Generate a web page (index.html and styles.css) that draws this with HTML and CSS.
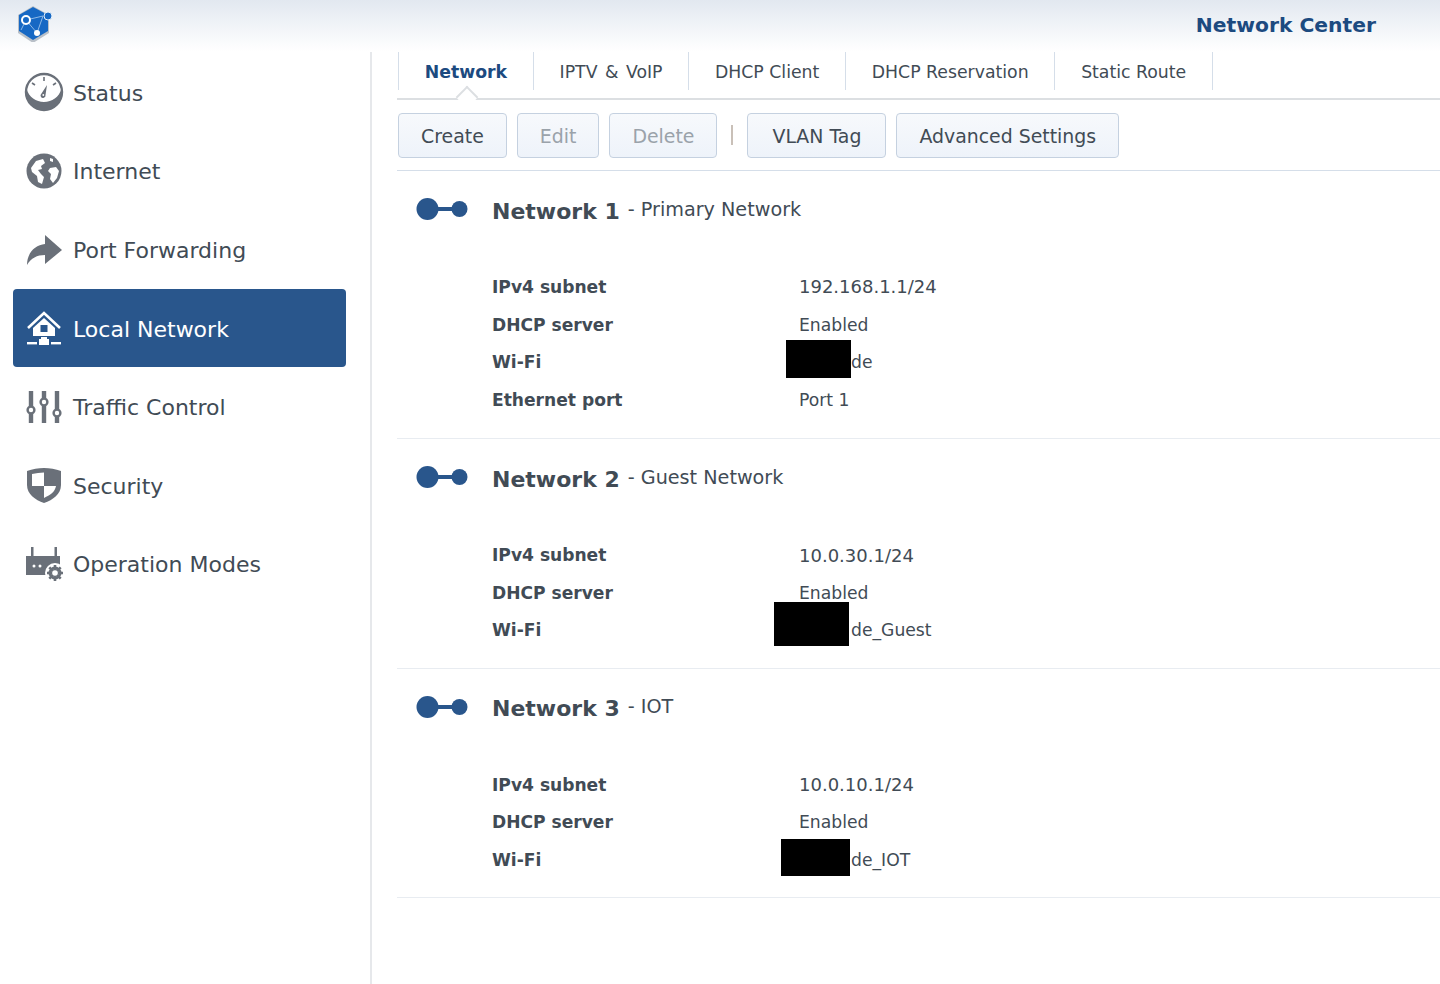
FILE: index.html
```html
<!DOCTYPE html>
<html lang="en">
<head>
  <meta charset="UTF-8">
  <title>Network Center</title>
  <link rel="stylesheet" href="styles.css">
</head>
<body>
  <header class="titlebar">
    <svg class="logo" viewBox="2 0 36 36">
      <path d="M17 0 33 9V27L17 37 2 27V9Z" fill="#b9c0c8"/>
      <path d="M17 1 32 9V25L17 34 3 25V9Z" fill="#1668c4"/>
      <path d="M10 14 27 10M10 14 21 27M27 10 21 27M10 14 5 24" stroke="#8db8e6" stroke-width="1" fill="none"/>
      <circle cx="10" cy="14" r="4" fill="#1668c4" stroke="#fff" stroke-width="2"/>
      <circle cx="21" cy="27" r="3" fill="#fff"/>
      <circle cx="32" cy="10" r="4" fill="#1668c4" stroke="#e8f0f8" stroke-width="1"/>
    </svg>
    <span class="app-name">Network Center</span>
  </header>

  <div class="app">
    <nav class="sidebar">
      <a class="nav-item">
        <svg class="nav-icon" viewBox="0 0 40 40">
          <circle cx="20" cy="20" r="18" fill="none" stroke="#6a7079" stroke-width="2.4"/>
          <path d="M2.500 17C5 25 12 30 20 30S35 25 37.500 17C39 31 29 38 20 38S1 31 2.500 17Z" fill="#6a7079"/>
          <path d="M20 5V9M8 11 11 13M32 11 29 13" stroke="#6a7079" stroke-width="1.6"/>
          <path d="M23 13 21.500 23A2.500 2.500 0 1 1 17.500 21.500Z" fill="#6a7079"/>
          <circle cx="19.300" cy="23" r=".9" fill="#fff"/>
        </svg>
        <span>Status</span>
      </a>
      <a class="nav-item">
        <svg class="nav-icon" viewBox="0 0 40 40">
          <circle cx="20" cy="20" r="17.5" fill="#6a7079"/>
          <path d="M7 17 12 10 19 8 21 12 17 15 18 18 14 19 17 23 20 26 18 33 14 31 13 25 8 21Z" fill="#fff"/>
          <path d="M26 17 32 16 35 20 33 27 29 32 26 28 27 23 24 20Z" fill="#fff"/>
          <path d="M26 7 29 8 29 11 26 10Z" fill="#fff"/>
        </svg>
        <span>Internet</span>
      </a>
      <a class="nav-item">
        <svg class="nav-icon" viewBox="0 0 40 40">
          <path d="M3 36C3 24 11 16 21 15V6L38 21 21 35V26C13 26 7 29 3 36Z" fill="#6a7079"/>
        </svg>
        <span>Port Forwarding</span>
      </a>
      <a class="nav-item active">
        <svg class="nav-icon" viewBox="0 0 40 40">
          <path d="M4 20 20 5 36 20" fill="none" stroke="#fff" stroke-width="2.6"/>
          <path d="M9 20 20 10 31 20V28H9Z" fill="#fff"/>
          <rect x="16.5" y="17" width="7" height="7" fill="#29568c"/>
          <rect x="17" y="29" width="6" height="2" fill="#fff"/>
          <rect x="15" y="31" width="10" height="6" fill="#fff"/>
          <rect x="3" y="34" width="10" height="2.4" fill="#fff"/>
          <rect x="27" y="34" width="10" height="2.4" fill="#fff"/>
        </svg>
        <span>Local Network</span>
      </a>
      <a class="nav-item">
        <svg class="nav-icon" viewBox="0 0 40 40">
          <path d="M7 4V36M20 4V36M33 4V36" stroke="#6a7079" stroke-width="4.4"/>
          <circle cx="7" cy="23" r="3.4" fill="#fff" stroke="#6a7079" stroke-width="2.4"/>
          <circle cx="20" cy="15" r="3.4" fill="#fff" stroke="#6a7079" stroke-width="2.4"/>
          <circle cx="33" cy="26" r="3.4" fill="#fff" stroke="#6a7079" stroke-width="2.4"/>
        </svg>
        <span>Traffic Control</span>
      </a>
      <a class="nav-item">
        <svg class="nav-icon" viewBox="0 0 40 40">
          <path d="M3 6C14 2 26 2 37 6V20C37 29 29 35 20 38 11 35 3 29 3 20Z" fill="#6a7079"/>
          <path d="M8 9C12 8 16 7.500 20 7.500V21H8Z" fill="#fff"/>
          <path d="M20 21H32C31 27 26 30 20 33Z" fill="#fff"/>
        </svg>
        <span>Security</span>
      </a>
      <a class="nav-item">
        <svg class="nav-icon" viewBox="0 0 40 40">
          <path d="M7 3H9.500V12H30.500V3H33V12H36V31H2V12H7Z" fill="#6a7079"/>
          <circle cx="10" cy="22" r="1.500" fill="#fff"/>
          <circle cx="16" cy="22" r="1.500" fill="#fff"/>
          <circle cx="31" cy="29" r="10" fill="#fff"/>
          <circle cx="31" cy="29" r="5" fill="none" stroke="#6a7079" stroke-width="3"/>
          <path d="M31 21V37M23 29H39M25.300 23.300 36.700 34.700M36.700 23.300 25.300 34.700" stroke="#6a7079" stroke-width="2.600"/>
          <circle cx="31" cy="29" r="2.800" fill="#fff"/>
        </svg>
        <span>Operation Modes</span>
      </a>
    </nav>

    <main class="content">
      <div class="tabs">
        <a class="tab active">Network</a>
        <a class="tab tab-spaced">IPTV &amp; VoIP</a>
        <a class="tab">DHCP Client</a>
        <a class="tab">DHCP Reservation</a>
        <a class="tab">Static Route</a>
      </div>

      <div class="toolbar">
        <button class="btn">Create</button>
        <button class="btn disabled">Edit</button>
        <button class="btn disabled">Delete</button>
        <span class="toolbar-sep"></span>
        <button class="btn btn-vlan">VLAN Tag</button>
        <button class="btn">Advanced Settings</button>
      </div>

      <section class="network">
        <div class="network-head">
          <svg class="network-icon" viewBox="0 0 52 24"><circle cx="11.500" cy="12" r="11" fill="#29568c"/><circle cx="43.500" cy="12" r="8" fill="#29568c"/><rect x="20" y="10" width="18" height="4" fill="#29568c"/></svg>
          <h2>Network 1</h2>
          <span class="network-sub">- Primary Network</span>
        </div>
        <dl class="props">
          <dt>IPv4 subnet</dt><dd class="num">192.168.1.1/24</dd>
          <dt>DHCP server</dt><dd>Enabled</dd>
          <dt>Wi-Fi</dt><dd class="wifi">de<i class="redact redact-1"></i></dd>
          <dt>Ethernet port</dt><dd>Port 1</dd>
        </dl>
      </section>

      <section class="network">
        <div class="network-head">
          <svg class="network-icon" viewBox="0 0 52 24"><circle cx="11.500" cy="12" r="11" fill="#29568c"/><circle cx="43.500" cy="12" r="8" fill="#29568c"/><rect x="20" y="10" width="18" height="4" fill="#29568c"/></svg>
          <h2>Network 2</h2>
          <span class="network-sub">- Guest Network</span>
        </div>
        <dl class="props">
          <dt>IPv4 subnet</dt><dd class="num">10.0.30.1/24</dd>
          <dt>DHCP server</dt><dd>Enabled</dd>
          <dt>Wi-Fi</dt><dd class="wifi">de_Guest<i class="redact redact-2"></i></dd>
        </dl>
      </section>

      <section class="network">
        <div class="network-head">
          <svg class="network-icon" viewBox="0 0 52 24"><circle cx="11.500" cy="12" r="11" fill="#29568c"/><circle cx="43.500" cy="12" r="8" fill="#29568c"/><rect x="20" y="10" width="18" height="4" fill="#29568c"/></svg>
          <h2>Network 3</h2>
          <span class="network-sub">- IOT</span>
        </div>
        <dl class="props">
          <dt>IPv4 subnet</dt><dd class="num">10.0.10.1/24</dd>
          <dt>DHCP server</dt><dd>Enabled</dd>
          <dt>Wi-Fi</dt><dd class="wifi">de_IOT<i class="redact redact-3"></i></dd>
        </dl>
      </section>
    </main>
  </div>
</body>
</html>
```

FILE: styles.css
```css
* {
  box-sizing: border-box;
}
html, body {
  margin: 0;
  height: 100%;
  overflow: hidden;
}
body {
  font-family: "DejaVu Sans", Verdana, sans-serif;
  font-size: 17.2px;
  color: #414b55;
  background: #fff;
}

.titlebar {
  height: 52px;
  padding: 6px 64px 0 18px;
  display: flex;
  justify-content: space-between;
  align-items: flex-start;
  background: linear-gradient(#e2e8f0, #fbfcfd 85%, #fff);
}
.logo {
  width: 36px;
  height: 36px;
}
.app-name {
  margin-top: 7px;
  font-size: 20.3px;
  font-weight: bold;
  color: #1c4a80;
}

.app {
  display: flex;
  height: 932px;
}

.sidebar {
  width: 372px;
  flex: none;
  padding: 1px 24px 0 13px;
  border-right: 2px solid #e6e8eb;
}
.nav-item {
  height: 78.6px;
  padding-left: 11px;
  display: flex;
  align-items: center;
  gap: 9px;
  font-size: 22px;
  color: #414b55;
  border-radius: 4px;
}
.nav-item span {
  margin-top: 2px;
}
.nav-item.active {
  background: #29568c;
  color: #fff;
}
.nav-icon {
  width: 40px;
  height: 40px;
  flex: none;
}

.content {
  flex: 1;
  padding-left: 25px;
}

.tabs {
  height: 48px;
  padding-left: 1px;
  display: flex;
  border-bottom: 2px solid #dcdfe2;
  position: relative;
  font-size: 17.3px;
}
.tab {
  height: 38px;
  padding: 2px 25.75px 0;
  display: flex;
  align-items: center;
  border-right: 1px solid #d5dee9;
}
.tab:first-child {
  border-left: 1px solid #d5dee9;
}
.tab-spaced {
  word-spacing: 2px;
}
.tab.active {
  font-weight: bold;
  color: #1c4a80;
  position: relative;
}
.tab.active::after {
  content: "";
  position: absolute;
  left: 60px;
  bottom: -15px;
  width: 14px;
  height: 14px;
  background: #fff;
  border-top: 2px solid #dcdfe2;
  border-left: 2px solid #dcdfe2;
  transform: rotate(45deg);
}

.toolbar {
  height: 71px;
  padding: 13px 0 0 1px;
  display: flex;
  align-items: flex-start;
  gap: 10px;
  border-bottom: 1px solid #d5dee9;
}
.btn {
  height: 45px;
  padding: 0 22px;
  font: inherit;
  font-size: 18.9px;
  color: #414b55;
  background: linear-gradient(#f7f9fc, #eef3fa);
  border: 1px solid #c5d1e0;
  border-radius: 4px;
}
.btn-vlan {
  padding: 0 24px;
}
.btn.disabled {
  color: #9aa2aa;
}
.toolbar-sep {
  width: 2px;
  height: 20px;
  margin: 12px 4px;
  background: #c9c0b8;
}

.network {
  padding: 20px 0 18.500px;
  border-bottom: 1px solid #e8ecf1;
}
.network:first-of-type {
  padding-bottom: 19.500px;
}
.network-head {
  height: 38px;
  display: flex;
  align-items: center;
  padding-left: 19px;
}
.network-icon {
  width: 52px;
  height: 24px;
  margin: -2px 24px 0 0;
  flex: none;
}
.network-head h2 {
  margin: 2px 8px 0 0;
  font-size: 22px;
  font-weight: bold;
}
.network-sub {
  margin-bottom: 2px;
  font-size: 19.2px;
}

.props {
  margin: 39px 0 0 95px;
  display: grid;
  grid-template-columns: 307px 1fr;
  grid-auto-rows: 37.7px;
  align-items: center;
}
.props dt {
  font-size: 17.1px;
  font-weight: bold;
}
.props dd {
  margin: 0;
}
.props .num {
  font-size: 18px;
}
.wifi {
  position: relative;
  padding-left: 52px;
}
.redact {
  position: absolute;
  background: #000;
}
.redact-1 {
  left: -13px;
  top: -12px;
  width: 65px;
  height: 38px;
}
.redact-2 {
  left: -25px;
  top: -18px;
  width: 75px;
  height: 44px;
}
.redact-3 {
  left: -18px;
  top: -11px;
  width: 69px;
  height: 37px;
}
```
